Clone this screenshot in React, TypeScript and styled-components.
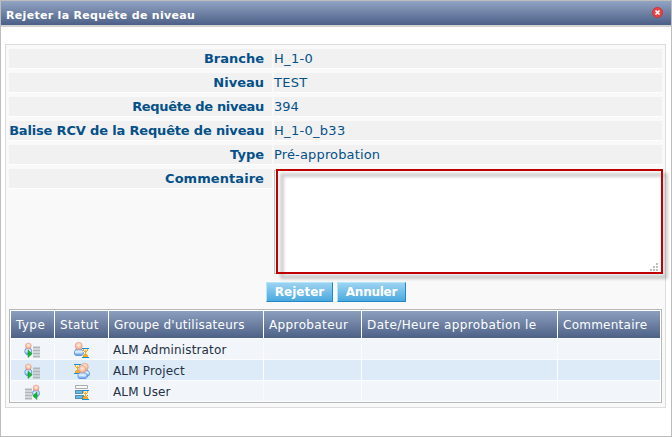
import React from "react";
import styled, { createGlobalStyle } from "styled-components";

const GlobalStyle = createGlobalStyle`
  * { box-sizing: border-box; }
  body { margin: 0; background: #fff; font-family: "DejaVu Sans", Verdana, sans-serif; font-size: 13px; }
`;

const Dialog = styled.main`
  width: 672px;
  height: 437px;
  border: 1px solid #bdbdbd;
  background: #fff;
  overflow: hidden;
`;

const TitleBar = styled.header`
  height: 26px;
  padding: 2px 8px 0 5px;
  display: flex;
  align-items: flex-start;
  justify-content: space-between;
  border-bottom: 2px solid #d2d2d2;
  background: linear-gradient(#92a4c3, #4c6087) padding-box;
`;

const Title = styled.h1`
  margin: 0;
  color: #fff;
  font-size: 11px;
  line-height: 25px;
  letter-spacing: 0.31px;
  white-space: nowrap;
`;

const CloseButton = styled.button`
  margin: 4px 0 0;
  padding: 0;
  border: 0;
  width: 11px;
  height: 11px;
  background: none;
  svg { display: block; }
`;

const Panel = styled.section`
  width: 661px;
  height: 364px;
  margin: 17px 0 0 4px;
  padding: 4px 3px;
  border: 1px solid #dcdcdc;
  background: #f9f9f9;
`;

const Fields = styled.dl`
  margin: 0;
  display: grid;
  grid-template-columns: 263px 388px;
  column-gap: 2px;
  row-gap: 4px;
`;

const Label = styled.dt<{ $spacing?: number }>`
  height: 20px;
  padding-right: 8px;
  border-bottom: 1px solid #fff;
  background: #f1f1f1;
  color: #045089;
  font-weight: bold;
  line-height: 19px;
  text-align: right;
  white-space: nowrap;
  letter-spacing: ${(p) => p.$spacing ?? 0}px;
`;

const Value = styled.dd<{ $spacing?: number }>`
  margin: 0;
  height: 20px;
  border-bottom: 1px solid #fff;
  background: #f1f1f1;
  color: #045089;
  line-height: 19px;
  letter-spacing: ${(p) => p.$spacing ?? 0}px;
`;

const CommentCell = styled.dd`
  position: relative;
  margin: 0;
  height: 105px;
`;

const CommentBox = styled.textarea`
  display: block;
  width: 388px;
  height: 104px;
  margin: 1px 0 0;
  border: 1px solid #c4c4c4;
  background: #fff;
  outline: none;
  resize: none;
`;

const HighlightShadow = styled.div`
  position: absolute;
  left: 6px;
  top: 4px;
  width: 388px;
  height: 106px;
  border: 4px solid rgba(0, 0, 0, 0.19);
  filter: blur(1.4px);
  pointer-events: none;
`;

const Highlight = styled.div`
  position: absolute;
  left: 2px;
  top: 0;
  width: 387px;
  height: 105px;
  border: 2px solid #bf0000;
  pointer-events: none;
`;

const Grip = styled.svg`
  position: absolute;
  left: 376px;
  top: 94px;
`;

const Actions = styled.div`
  display: flex;
  justify-content: center;
  gap: 4px;
  margin-top: 8px;
  padding-left: 1px;
`;

const ActionButton = styled.button<{ $width: number; $spacing?: number }>`
  width: ${(p) => p.$width}px;
  height: 20px;
  padding: 0;
  border: 1px solid;
  border-color: #b2e7fb #2388c5 #2388c5 #b2e7fb;
  background: linear-gradient(#9dd3f2, #4aa9df);
  color: #fff;
  font: bold 12px/19px "DejaVu Sans", Verdana, sans-serif;
  letter-spacing: ${(p) => p.$spacing ?? 0}px;
`;

const Approvals = styled.table`
  width: 653px;
  margin-top: 7px;
  border: 1px solid #b8b8b8;
  border-collapse: separate;
  border-spacing: 0;
  table-layout: fixed;
  padding: 1px 1px 0;
  background: #fff;
`;

const HeadCell = styled.th<{ $spacing?: number }>`
  height: 27px;
  padding: 0 0 0 5px;
  border-right: 1px solid #fff;
  background: linear-gradient(#8d9fbf, #4d6187);
  color: #fff;
  font-size: 12px;
  font-weight: normal;
  text-align: left;
  white-space: nowrap;
  letter-spacing: ${(p) => p.$spacing ?? 0}px;
  &:last-child { border-right: 0; }
`;

const Row = styled.tr`
  background: #f2f6fb;
  &:nth-child(2) { background: #dcebf7; }
`;

const Cell = styled.td<{ $indent?: number }>`
  height: 21px;
  padding: 2px 0 0 ${(p) => p.$indent ?? 4}px;
  border-right: 1px solid #fbfcfe;
  border-bottom: 1px solid #fbfcfe;
  color: #263143;
  font-size: 12px;
  line-height: 18px;
  letter-spacing: 0.16px;
  white-space: nowrap;
  vertical-align: top;
  &:last-child { border-right: 0; }
  tr:first-child > & { height: 22px; border-top: 1px solid #fbfcfe; }
  svg { display: block; }
`;

const Gradients = () => (
  <svg width="0" height="0" display="block">
    <defs>
      <radialGradient id="skin" cx="0.5" cy="0.4" r="0.6">
        <stop offset="0" stopColor="#fff0e4" />
        <stop offset="0.55" stopColor="#f8c8ac" />
        <stop offset="1" stopColor="#e29a86" />
      </radialGradient>
      <linearGradient id="shirt" x1="0" y1="0" x2="0" y2="1">
        <stop offset="0" stopColor="#8fb9f0" />
        <stop offset="0.45" stopColor="#e5f5ff" />
        <stop offset="1" stopColor="#4b8fe5" />
      </linearGradient>
    </defs>
  </svg>
);

const Person = ({ x, y, small }: { x: number; y: number; small?: boolean }) => (
  <g transform={`translate(${x} ${y})`}>
    <path
      d={small ? "M1.8 6H5.8L7.1 8V10.5L5.8 12.5H2L.5 10.5V8Z" : "M2.2 7H7.2L9.3 9.2V12L8 13.3H1.6L.5 12V9.2Z"}
      fill="url(#shirt)"
      stroke="#5b90df"
      strokeWidth="0.9"
    />
    <circle cx={small ? 3.9 : 4.7} cy="3.8" r={small ? 2.9 : 3.6} fill="url(#skin)" stroke="#e5a08e" strokeWidth="0.6" />
  </g>
);

const Hourglass = ({ x, y }: { x: number; y: number }) => (
  <g transform={`translate(${x} ${y})`} shapeRendering="crispEdges">
    <path d="M1 1H6V4L5 5V6L6 7V9H1V7L2 6V5L1 4Z" fill="#fff4bf" />
    <path d="M0 0H7V1H0ZM0 9H7V10H0Z" fill="#168bda" />
    <path d="M1 1H2V3H1ZM5 1H6V3H5ZM2 3H3V4H2ZM4 3H5V4H4ZM3 4H4V6H3ZM2 6H3V7H2ZM4 6H5V7H4ZM1 7H2V9H1ZM5 7H6V9H5Z" fill="#e9a23c" />
    <path d="M3 2H4V4H3ZM3 6H4V7H5V9H2V7H3Z" fill="#ffae16" />
  </g>
);

const TypeIcon = ({ reverse }: { reverse?: boolean }) => (
  <svg width="16" height="17" viewBox="0 -1 16 17">
    <Person x={reverse ? 8.2 : 0.5} y={0.1} small />
    <path
      d={reverse ? "M1 5.5H8M1 8.5H8M1 11.5H8M1 14.5H8" : "M9 5.5H16M9 8.5H16M9 11.5H16M9 14.5H16"}
      stroke="#b3b6b9"
      strokeWidth="1.8"
    />
    <path d={reverse ? "M13 8V15.5L8.8 11.8Z" : "M4 8V15.5L8.2 11.8Z"} fill="#16b82e" stroke="#079a20" strokeWidth="0.5" />
  </svg>
);

const StatusIcon = ({ kind }: { kind: "user" | "group" | "queue" }) => (
  <svg width="16" height="17" viewBox="0 -1 16 17">
    {kind === "user" && <><Person x={0} y={0.1} /><Hourglass x={8} y={6} /></>}
    {kind === "group" && <><Hourglass x={0} y={1} /><Person x={6} y={0} /><Person x={3.6} y={2.4} /></>}
    {kind === "queue" && (
      <>
        <path d="M1.5 1.5H13.5V4.5H1.5Z" fill="#fafafa" stroke="#a9adb0" />
        <path d="M1 6H14V10H1ZM1 11H14V15H1Z" fill="#5b8dad" />
        <path d="M2 7H8V9H2ZM2 12H8V14H2Z" fill="#64bce8" />
        <Hourglass x={8} y={6} />
      </>
    )}
  </svg>
);

const fields = [
  { label: "Branche", value: "H_1-0", valueSpacing: 0.3 },
  { label: "Niveau", value: "TEST", valueSpacing: 0.3 },
  { label: "Requête de niveau", labelSpacing: -0.33, value: "394" },
  { label: "Balise RCV de la Requête de niveau", labelSpacing: -0.17, value: "H_1-0_b33", valueSpacing: 0.3 },
  { label: "Type", value: "Pré-approbation", valueSpacing: 0.15 },
];

const columns = [
  { label: "Type", width: 44, spacing: 0.4 },
  { label: "Statut", width: 54, spacing: 0.35 },
  { label: "Groupe d'utilisateurs", width: 155, spacing: 0.25 },
  { label: "Approbateur", width: 98, spacing: 0.38 },
  { label: "Date/Heure approbation le", width: 196, spacing: 0.39 },
  { label: "Commentaire", spacing: 0.25 },
];

const rows = [
  { group: "ALM Administrator", kind: "user" as const },
  { group: "ALM Project", kind: "group" as const },
  { group: "ALM User", kind: "queue" as const, reverse: true },
];

export default function App() {
  return (
    <>
      <GlobalStyle />
      <Dialog>
        <TitleBar>
          <Title>Rejeter la Requête de niveau</Title>
          <CloseButton aria-label="Fermer">
            <svg width="11" height="11" viewBox="0 0 11 11">
              <circle cx="5.5" cy="5.5" r="5" fill="#e94443" stroke="#d0333a" />
              <path d="M3.5 3.5L7.5 7.5M7.5 3.5L3.5 7.5" stroke="#fff" strokeWidth="1.7" />
            </svg>
          </CloseButton>
        </TitleBar>
        <Panel>
          <Fields>
            {fields.map(({ label, value, labelSpacing, valueSpacing }) => (
              <React.Fragment key={label}>
                <Label $spacing={labelSpacing}>{label}</Label>
                <Value $spacing={valueSpacing}>{value}</Value>
              </React.Fragment>
            ))}
            <Label $spacing={0.06}>Commentaire</Label>
            <CommentCell>
              <CommentBox aria-label="Commentaire" />
              <HighlightShadow />
              <Highlight />
              <Grip width="8" height="8" fill="#bdbdbd">
                <path d="M6 0h2v2H6ZM3 3h2v2H3ZM6 3h2v2H6ZM0 6h2v2H0ZM3 6h2v2H3ZM6 6h2v2H6Z" />
              </Grip>
            </CommentCell>
          </Fields>
          <Actions>
            <ActionButton $width={67}>Rejeter</ActionButton>
            <ActionButton $width={69} $spacing={-0.25}>Annuler</ActionButton>
          </Actions>
          <Approvals>
            <colgroup>
              {columns.map((c) => <col key={c.label} width={c.width} />)}
            </colgroup>
            <thead>
              <tr>{columns.map((c) => <HeadCell key={c.label} $spacing={c.spacing}>{c.label}</HeadCell>)}</tr>
            </thead>
            <tbody>
              {rows.map((r) => (
                <Row key={r.group}>
                  <Cell $indent={13}><TypeIcon reverse={r.reverse} /></Cell>
                  <Cell $indent={19}><StatusIcon kind={r.kind} /></Cell>
                  <Cell>{r.group}</Cell>
                  <Cell /><Cell /><Cell />
                </Row>
              ))}
            </tbody>
          </Approvals>
        </Panel>
        <Gradients />
      </Dialog>
    </>
  );
}
